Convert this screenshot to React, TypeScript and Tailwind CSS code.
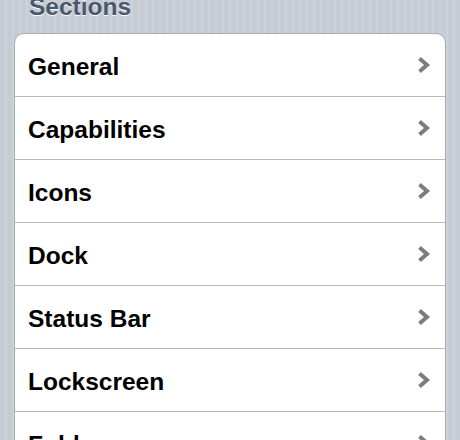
const sections = [
  "General",
  "Capabilities",
  "Icons",
  "Dock",
  "Status Bar",
  "Lockscreen",
  "Folders",
  "Springboard",
];

function Chevron() {
  return (
    <svg width="15" height="20" viewBox="0 0 15 20" className="-mt-[4px] shrink-0">
      <path
        d="M3.5 3.5 L11 10 L3.5 16.5"
        fill="none"
        stroke="#7d7d7d"
        strokeWidth="4"
        strokeLinejoin="miter"
      />
    </svg>
  );
}

export default function App() {
  return (
    <div
      className="h-[440px] overflow-hidden bg-[repeating-linear-gradient(90deg,#c5ccd4_0px,#c5ccd4_5px,#cbd2d9_5px,#cbd2d9_7px)]"
      style={{ fontFamily: '"Liberation Sans", Arial, sans-serif' }}
    >
      <h2 className="-mt-[5px] pl-[29px] text-[24.5px] leading-6 font-bold text-[#4c566c] [text-shadow:0_1px_0_#ffffff]">
        Sections
      </h2>

      <div className="mx-[14px] mt-[14px] overflow-hidden rounded-[10px] border border-[#a9adb2] bg-white">
        {sections.map((name) => (
          <div
            key={name}
            className="flex h-[63px] items-center justify-between border-b border-[#bababa] pt-[4px] pl-[13px] pr-[14px] last:border-b-0"
          >
            <span className="text-[24.5px] leading-6 font-bold text-black">{name}</span>
            <Chevron />
          </div>
        ))}
      </div>
    </div>
  );
}
